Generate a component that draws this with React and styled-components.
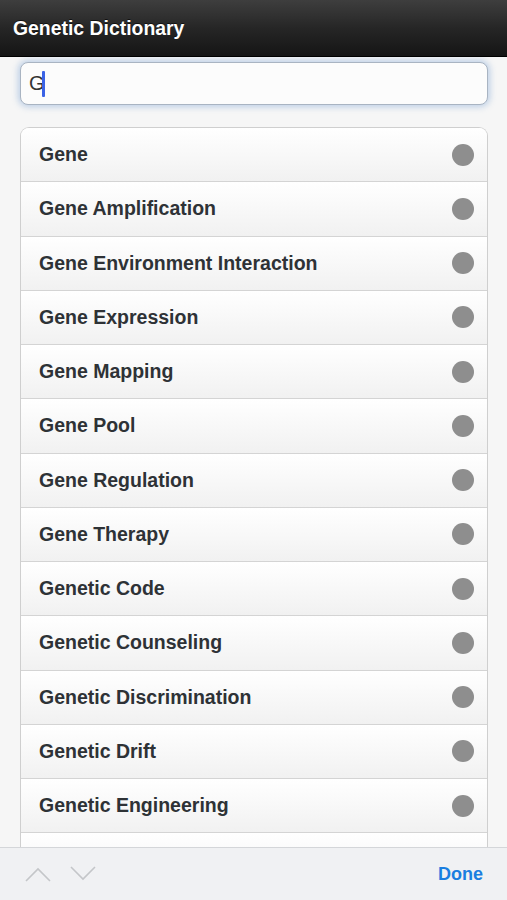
import React from "react";
import styled, { createGlobalStyle } from "styled-components";

const GlobalStyle = createGlobalStyle`
  html, body {
    margin: 0;
    padding: 0;
    background: #f6f6f6;
    font-family: "Liberation Sans", Arial, sans-serif;
  }
`;

const terms = [
  "Gene",
  "Gene Amplification",
  "Gene Environment Interaction",
  "Gene Expression",
  "Gene Mapping",
  "Gene Pool",
  "Gene Regulation",
  "Gene Therapy",
  "Genetic Code",
  "Genetic Counseling",
  "Genetic Discrimination",
  "Genetic Drift",
  "Genetic Engineering",
];

export default function App() {
  return (
    <>
      <GlobalStyle />
      <Screen>
        <Header>
          <Title>Genetic Dictionary</Title>
        </Header>
        <Content>
          <SearchBox>
            <SearchText>G</SearchText>
            <Caret />
          </SearchBox>
          <List>
            {terms.map((t) => (
              <Row key={t}>
                <RowLabel>{t}</RowLabel>
                <Dot />
              </Row>
            ))}
            {/* next row, hidden under the toolbar */}
            <Row />
          </List>
        </Content>
        <Footer>
          <Arrows>
            <ArrowIcon viewBox="0 0 26 16">
              <path d="M1 15 L13 3 L25 15" />
            </ArrowIcon>
            <ArrowIcon viewBox="0 0 26 16">
              <path d="M1 1 L13 13 L25 1" />
            </ArrowIcon>
          </Arrows>
          <Done>Done</Done>
        </Footer>
      </Screen>
    </>
  );
}

const Screen = styled.div`
  width: 507px;
  height: 900px;
  display: flex;
  flex-direction: column;
  overflow: hidden;
  background: #f6f6f6;
`;

const Header = styled.div`
  height: 57px;
  flex-shrink: 0;
  display: flex;
  align-items: center;
  padding: 0 13px;
  box-sizing: border-box;
  background: linear-gradient(#3e3e3e, #262626 50%, #151515);
  border-bottom: 1px solid #000;
`;

const Title = styled.h1`
  margin: 0;
  color: #fff;
  font-size: 19.4px;
  font-weight: bold;
  text-shadow: 0 -1px 0 rgba(0, 0, 0, 0.6);
`;

const Content = styled.div`
  flex: 1;
  overflow: hidden;
  padding: 5px 19px 0 20px;
  display: flex;
  flex-direction: column;
  gap: 22px;
`;

const SearchBox = styled.div`
  height: 43px;
  flex-shrink: 0;
  box-sizing: border-box;
  display: flex;
  align-items: center;
  padding: 0 8px;
  background: #fcfcfc;
  border: 1px solid #a9b4c2;
  border-radius: 8px;
  box-shadow: 0 0 6px 2px rgba(120, 160, 210, 0.45);
`;

const SearchText = styled.span`
  font-size: 20px;
  color: #333;
`;

const Caret = styled.span`
  width: 3px;
  height: 26px;
  margin-left: -3px;
  background: #3b63e6;
  border-radius: 1px;
`;

const List = styled.div`
  flex-shrink: 0;
  border: 1px solid #cfcfcf;
  border-bottom: none;
  border-radius: 9px 9px 0 0;
  overflow: hidden;
  background: #fff;
`;

const Row = styled.div`
  height: 54.25px;
  box-sizing: border-box;
  display: flex;
  align-items: center;
  justify-content: space-between;
  padding: 0 13px 0 18px;
  background: linear-gradient(#ffffff, #f1f1f1);
  border-bottom: 1px solid #d4d4d4;
`;

const RowLabel = styled.span`
  font-size: 19.5px;
  font-weight: bold;
  color: #2e3236;
`;

const Dot = styled.span`
  width: 22px;
  height: 22px;
  border-radius: 50%;
  background: #8e8e8e;
`;

const Footer = styled.div`
  height: 53px;
  flex-shrink: 0;
  box-sizing: border-box;
  display: flex;
  align-items: center;
  justify-content: space-between;
  padding: 0 24px 0 25px;
  background: #f0f1f3;
  border-top: 1px solid #d4d6d9;
`;

const Arrows = styled.div`
  display: flex;
  gap: 19px;
`;

const ArrowIcon = styled.svg`
  width: 26px;
  height: 16px;
  fill: none;
  stroke: #c4c6c9;
  stroke-width: 1.6;
`;

const Done = styled.span`
  font-size: 18px;
  font-weight: bold;
  color: #1a7ee0;
`;
